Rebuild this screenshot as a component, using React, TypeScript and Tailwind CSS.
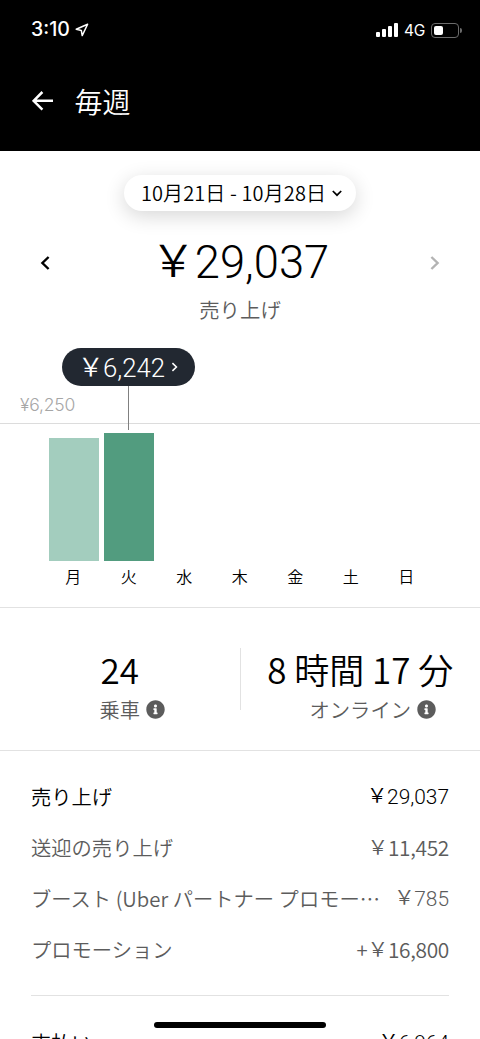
/**
 * App.tsx
 * --------------------
 * Weekly earnings screen: period picker, daily bar chart,
 * trip / online stats and the earnings breakdown.
 */

import { FaInfoCircle } from "react-icons/fa";

interface DayEntry {
  label: string;
  height: number;
  selected?: boolean;
}

interface BreakdownRow {
  label: string;
  prefix?: string;
  amount: string;
  strong?: boolean;
}

const DAYS: DayEntry[] = [
  { label: "月", height: 123 },
  { label: "火", height: 128, selected: true },
  { label: "水", height: 0 },
  { label: "木", height: 0 },
  { label: "金", height: 0 },
  { label: "土", height: 0 },
  { label: "日", height: 0 },
];

const ROWS: BreakdownRow[] = [
  { label: "売り上げ", amount: "29,037", strong: true },
  { label: "送迎の売り上げ", amount: "11,452" },
  { label: "ブースト (Uber パートナー プロモー…", amount: "785" },
  { label: "プロモーション", prefix: "+", amount: "16,800" },
];

function StatusBar() {
  return (
    <div className="flex h-[60px] items-center justify-between pr-[18px] pl-[31px] font-['Inter',sans-serif]">
      <div className="flex items-center gap-[5px]">
        <span className="text-[19.5px] font-medium">3:10</span>
        <svg width="14" height="14" viewBox="0 0 14 14" fill="none">
          <path
            d="M12.6 1.2 1.2 6.2 6.3 7.4 7.2 12.6Z"
            stroke="currentColor"
            strokeWidth="1.5"
            strokeLinejoin="round"
          />
        </svg>
      </div>
      <div className="flex items-center">
        <div className="flex items-end gap-[2px]">
          <span className="h-[5px] w-1 rounded-[1px] bg-white" />
          <span className="h-2 w-1 rounded-[1px] bg-white" />
          <span className="h-[11px] w-1 rounded-[1px] bg-white" />
          <span className="h-[14px] w-1 rounded-[1px] bg-white" />
        </div>
        <span className="ml-[6px] pt-px text-[15.5px] tracking-[-0.3px]">4G</span>
        <div className="ml-[6px] flex h-[15px] w-[28px] items-center rounded-[4px] border border-[#6b6b6b] pl-[2px]">
          <span className="h-[9px] w-[9px] rounded-[2px] bg-white" />
        </div>
        <span className="ml-px h-[5px] w-[2px] rounded-r-full bg-[#6b6b6b]" />
      </div>
    </div>
  );
}

function Header() {
  return (
    <header className="h-[151px] shrink-0 bg-black text-white">
      <StatusBar />
      <div className="flex h-[82px] items-center pl-[32px]">
        <svg width="21" height="20" viewBox="0 0 21 20" fill="none">
          <path
            d="M10.4 1 1.6 9.8l8.8 8.8M1.6 9.8H21"
            stroke="currentColor"
            strokeWidth="2.5"
          />
        </svg>
        <h1 className="ml-[21.5px] text-[28px] leading-none font-[350]">毎週</h1>
      </div>
    </header>
  );
}

function Chevron({ className, d, strokeWidth = 2.4 }: { className: string; d: string; strokeWidth?: number }) {
  return (
    <svg className={className} viewBox="0 0 10 14" fill="none">
      <path d={d} stroke="currentColor" strokeWidth={strokeWidth} />
    </svg>
  );
}

/** Yen amount; the full-width sign is raised so it sits on the digits' baseline. */
function Yen({ amount, prefix }: { amount: string; prefix?: string }) {
  // Figures with a "1" keep the footed glyph of the Japanese face
  const digits = amount.includes("1")
    ? "text-[1.03em] tracking-[-0.015em]"
    : "font-['Roboto',sans-serif] text-[1.03em]";
  return (
    <span className="flex items-baseline">
      {prefix && <span>{prefix}</span>}
      <span className="relative -top-[0.03em] -mr-[0.02em] text-[1.02em]">￥</span>
      <span className={digits}>{amount}</span>
    </span>
  );
}

function Summary() {
  return (
    <section className="flex h-[197px] shrink-0 flex-col pt-[24px]">
      <button className="mx-auto flex h-[36px] w-[232px] items-center justify-center rounded-full bg-white pl-[3px] text-[20px] leading-none font-[350] tracking-[0.1px] whitespace-nowrap shadow-[0_5px_20px_rgba(0,0,0,0.16)]">
        <span>10月21日 - 10月28日</span>
        <svg className="ml-[6px] h-[7px] w-[10px]" viewBox="0 0 10 7" fill="none">
          <path d="M.8 1 5 5.2 9.2 1" stroke="currentColor" strokeWidth="1.7" />
        </svg>
      </button>
      <div className="mt-[22px] flex h-[60px] items-center justify-between px-[40px]">
        <Chevron className="h-[14px] w-[10px]" d="M8.6 1 2.4 7l6.2 6" />
        <span className="pb-[3px] text-[44px] leading-none font-[350]">
          <Yen amount="29,037" />
        </span>
        <Chevron className="h-[14px] w-[10px] text-[#b3b3b3]" d="M1.4 1 7.6 7l-6.2 6" />
      </div>
      <p className="mt-[4px] text-center text-[20.4px] leading-6 font-[350] text-[#5c5c5c]">
        売り上げ
      </p>
    </section>
  );
}

function Chart() {
  return (
    <section className="relative h-[260px] shrink-0 border-b border-[#e2e2e2]">
      <div className="flex h-[76px] items-end border-b border-[#dcdcdc] pb-[7px] pl-[20px]">
        <span className="font-['Inter',sans-serif] text-[17.5px] leading-[22px] font-light tracking-[-0.2px] text-[#a6a6a6]">
          ¥6,250
        </span>
      </div>
      <div className="flex h-[137px] items-end pl-[45.9px]">
        {DAYS.map((day) => (
          <div key={day.label} className="flex w-[55.5px] justify-center">
            <div
              className={`w-[50px] ${day.selected ? "bg-[#529c7f]" : "bg-[#a3cdbe]"}`}
              style={{ height: day.height }}
            />
          </div>
        ))}
      </div>
      <div className="flex pt-[6px] pl-[45.5px]">
        {DAYS.map((day) => (
          <span key={day.label} className="w-[55.5px] text-center text-[16px] leading-[18px] font-[350]">
            {day.label}
          </span>
        ))}
      </div>

      {/* Callout over the selected bar */}
      <div className="absolute top-0 left-[62px] flex w-[133px] flex-col items-center">
        <div className="flex h-[38px] w-full items-center justify-center rounded-full bg-[#222831] text-[25px] leading-none font-[350] text-white">
          <Yen amount="6,242" />
          <Chevron className="ml-[6px] h-[10px] w-[8px]" d="M1.4 1.5 7 7l-5.6 5.5" strokeWidth={2.2} />
        </div>
        <span className="h-[44px] w-[1.5px] bg-[#808080]" />
      </div>
    </section>
  );
}

function Stat({ value, label }: { value: string; label: string }) {
  return (
    <div className="flex flex-1 flex-col items-center pt-[41px]">
      <span className="text-[35px] leading-[40px] font-[350] whitespace-nowrap">{value}</span>
      <span className="mt-[8px] flex items-center text-[20.3px] leading-6 font-[350] text-[#5c5c5c]">
        {label}
        <FaInfoCircle className="-mr-[25px] ml-[6px] h-[19px] w-[19px]" />
      </span>
    </div>
  );
}

function Breakdown() {
  return (
    <section className="flex flex-col px-[31px] pt-[20px]">
      <ul className="flex h-[225px] flex-col border-b border-[#e2e2e2]">
        {ROWS.map((row) => (
          <li
            key={row.label}
            className={`flex h-[51px] items-center justify-between text-[20.3px] leading-none font-[350] whitespace-nowrap ${
              row.strong ? "text-black" : "text-[#5c5c5c]"
            }`}
          >
            <span>{row.label}</span>
            <Yen amount={row.amount} prefix={row.prefix} />
          </li>
        ))}
      </ul>
      <div className="flex h-[51px] shrink-0 items-center justify-between pt-[42px] text-[20.3px] font-[350]">
        <span>支払い</span>
        <Yen amount="6,964" />
      </div>
    </section>
  );
}

export default function App() {
  return (
    <div className="relative flex h-[1039px] w-[480px] flex-col overflow-hidden bg-white font-['Noto_Sans_CJK_JP',sans-serif] text-black">
      <Header />
      <Summary />
      <Chart />
      <section className="flex h-[143px] shrink-0 border-b border-[#e2e2e2]">
        <Stat value="24" label="乗車" />
        <span className="mt-[40px] h-[62px] w-px bg-[#e2e2e2]" />
        <Stat value="8 時間 17 分" label="オンライン" />
      </section>
      <Breakdown />
      {/* Home indicator */}
      <span className="absolute bottom-[11px] left-[154px] h-[6px] w-[172px] rounded-full bg-black" />
    </div>
  );
}
